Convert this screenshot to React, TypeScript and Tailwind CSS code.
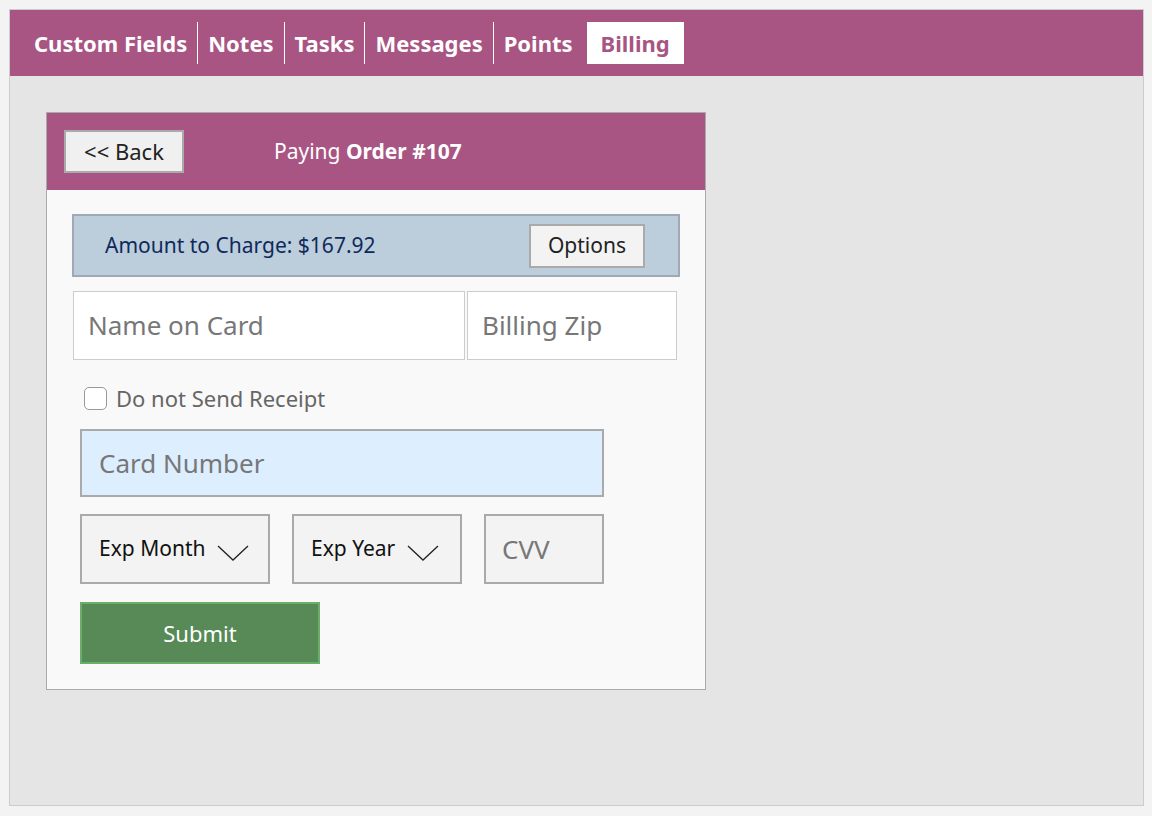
import React from 'react';

const tabs = ['Custom Fields', 'Notes', 'Tasks', 'Messages', 'Points'];

function Chevron() {
  return (
    <svg width="32" height="18" viewBox="0 0 32 18" className="mt-2">
      <path d="M1 2 L16 16 L31 2" fill="none" stroke="#222" strokeWidth="1.3" />
    </svg>
  );
}

export default function App() {
  return (
    <div className="w-[1152px] h-[816px] bg-[#f3f3f3] p-[9px] font-['Liberation_Sans',Arial,sans-serif]">
      <div className="w-[1135px] h-[797px] border border-[#cccccc] bg-[#e5e5e5]">
        {/* tab bar */}
        <div className="h-[66px] bg-[#a85583] flex items-center pl-[14px]">
          {tabs.map((t, i) => (
            <div key={t} className={`h-[42px] flex items-center px-[10px] text-white font-bold text-[22px] ${i > 0 ? 'border-l border-white' : ''}`}>
              {t}
            </div>
          ))}
          <div className="h-[42px] flex items-center px-[14px] ml-[4px] bg-white text-[#a85583] font-bold text-[22px]">Billing</div>
        </div>

        <div className="pt-[36px] pl-[36px]">
          <div className="w-[660px] border border-[#aaaaaa] bg-[#f9f9f9]">
            {/* header */}
            <div className="h-[77px] bg-[#a85583] flex items-center pl-[17px]">
              <button className="w-[120px] h-[43px] bg-[#f0f0f0] border-2 border-[#aaaaaa] text-[22px] text-[#222]">&lt;&lt; Back</button>
              <div className="ml-[90px] text-white text-[21px]">Paying <span className="font-bold">Order #107</span></div>
            </div>

            <div className="pt-[24px] pl-[25px] pb-[25px]">
              <div className="w-[608px] h-[63px] bg-[#bccddc] border-2 border-[#9fa8b3] flex items-center pl-[31px] pr-[33px] justify-between">
                <span className="text-[21px] text-[#0f2a5a]">Amount to Charge: $167.92</span>
                <button className="w-[116px] h-[44px] bg-[#f3f3f3] border-2 border-[#aaaaaa] text-[21px] text-[#222]">Options</button>
              </div>

              <div className="flex gap-[2px] mt-[14px] ml-[1px]">
                <div className="w-[392px] h-[69px] bg-white border border-[#cccccc] flex items-center pl-[14px] text-[26px] text-[#777]">Name on Card</div>
                <div className="w-[210px] h-[69px] bg-white border border-[#cccccc] flex items-center pl-[14px] text-[26px] text-[#777]">Billing Zip</div>
              </div>

              <div className="flex items-center mt-[22px] ml-[12px] gap-[9px]">
                <div className="w-[23px] h-[23px] rounded-[5px] border border-[#999] bg-white" />
                <span className="text-[22px] text-[#666]">Do not Send Receipt</span>
              </div>

              <div className="ml-[8px] mt-[14px] w-[524px] h-[68px] bg-[#ddeeff] border-2 border-[#aaaaaa] flex items-center pl-[17px] text-[26px] text-[#777]">Card Number</div>

              <div className="ml-[8px] mt-[17px] flex gap-[22px]">
                <div className="w-[190px] h-[70px] bg-[#f3f3f3] border-2 border-[#aaaaaa] flex items-center pl-[17px] gap-[12px] text-[21px] text-[#111]">Exp Month <Chevron /></div>
                <div className="w-[170px] h-[70px] bg-[#f3f3f3] border-2 border-[#aaaaaa] flex items-center pl-[17px] gap-[12px] text-[21px] text-[#111]">Exp Year <Chevron /></div>
                <div className="w-[120px] h-[70px] bg-[#f3f3f3] border-2 border-[#aaaaaa] flex items-center pl-[16px] text-[26px] text-[#777]">CVV</div>
              </div>

              <button className="ml-[8px] mt-[18px] w-[240px] h-[62px] bg-[#578a57] border-2 border-[#6aae6a] text-white text-[22px]">Submit</button>
            </div>
          </div>
        </div>
      </div>
    </div>
  );
}
